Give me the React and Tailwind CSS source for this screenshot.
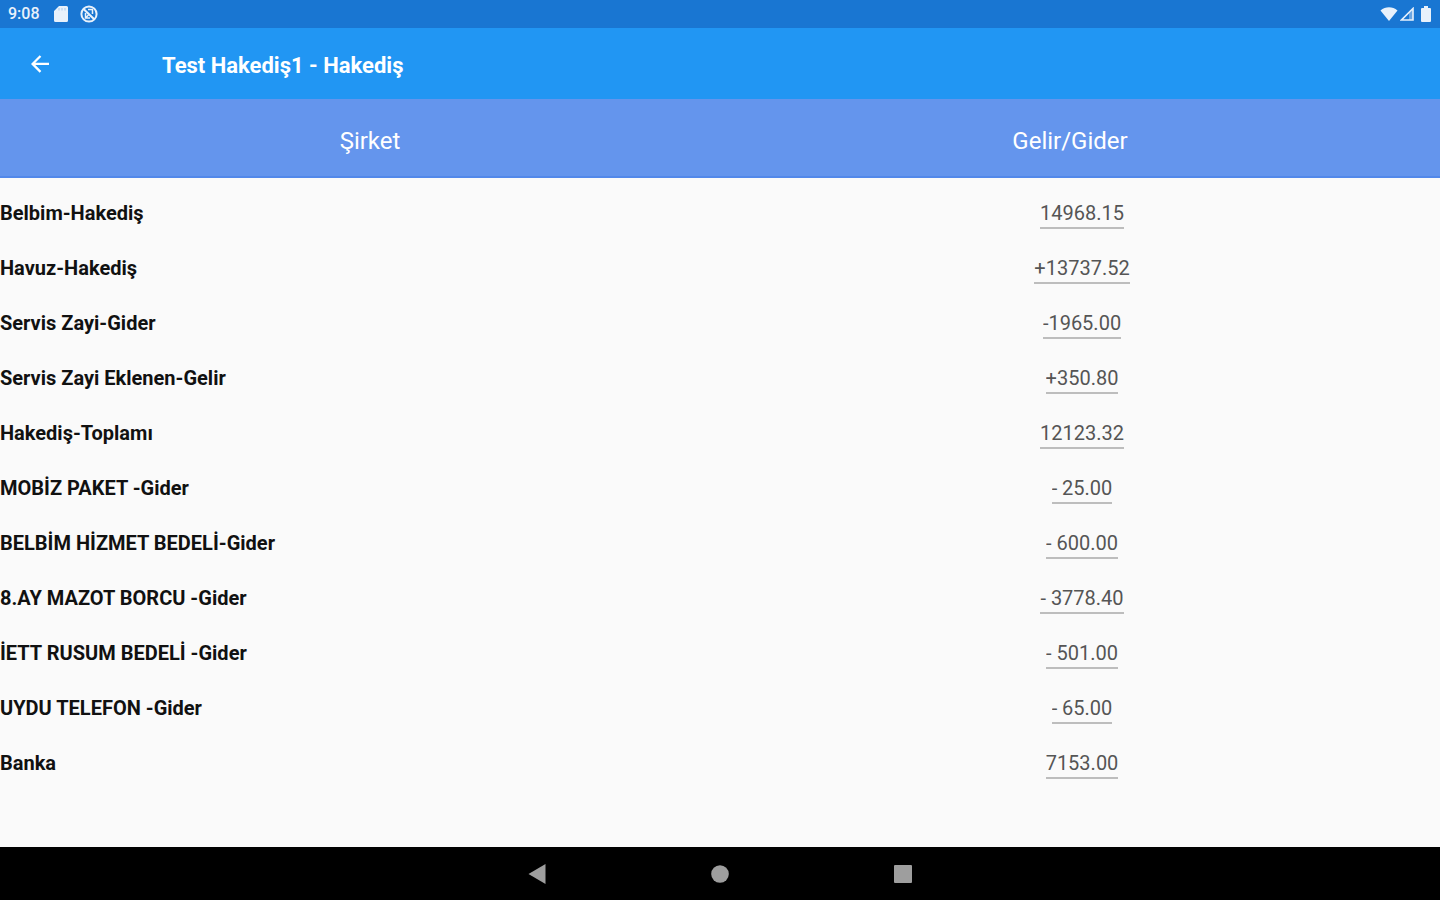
import React, { useState } from 'react';

const initialRows = [
    { id: 'belbim', label: 'Belbim-Hakediş', value: '14968.15' },
    { id: 'havuz', label: 'Havuz-Hakediş', value: '+13737.52' },
    { id: 'zayi-gider', label: 'Servis Zayi-Gider', value: '-1965.00' },
    { id: 'zayi-gelir', label: 'Servis Zayi Eklenen-Gelir', value: '+350.80' },
    { id: 'toplam', label: 'Hakediş-Toplamı', value: '12123.32' },
    { id: 'mobiz', label: 'MOBİZ PAKET -Gider', value: '- 25.00' },
    { id: 'hizmet', label: 'BELBİM HİZMET BEDELİ-Gider', value: '- 600.00' },
    { id: 'mazot', label: '8.AY MAZOT BORCU -Gider', value: '- 3778.40' },
    { id: 'rusum', label: 'İETT RUSUM BEDELİ -Gider', value: '- 501.00' },
    { id: 'telefon', label: 'UYDU TELEFON -Gider', value: '- 65.00' },
    { id: 'banka', label: 'Banka', value: '7153.00' }
];

const App = () => {
    const [rows, setRows] = useState(initialRows);

    const updateRow = (id, value) => {
        setRows(rows.map((row) => (row.id === id ? { ...row, value } : row)));
    };

    return (
        <div className="flex min-h-screen flex-col bg-[#fafafa] font-['Roboto',sans-serif]">
            <StatusBar />

            {/* App bar */}
            <header className="flex h-[71px] items-center bg-[#2196f3] text-white">
                <button type="button" aria-label="Geri" className="ml-7 flex size-6 items-center justify-center">
                    <svg viewBox="0 0 24 24" className="size-6" fill="currentColor">
                        <path d="M21 10.8v2.3H7.3l6 6-1.6 1.6L3 11.9l8.700-8.700 1.600 1.600-6 6z" />
                    </svg>
                </button>
                <h1 className="ml-[110px] pt-1 text-[22px] leading-7 font-bold">Test Hakediş1 - Hakediş</h1>
            </header>

            <main className="flex-1">
                <table className="w-full table-fixed border-collapse">
                    <thead>
                        <tr className="h-[79px] bg-[#6495ed] text-2xl text-white shadow-[inset_0_-2px_0_#5288ea]">
                            <th scope="col" className="p-0 pt-1 pl-5 text-center font-normal">Şirket</th>
                            <th scope="col" className="p-0 pt-1 pr-5 text-center font-normal">Gelir/Gider</th>
                        </tr>
                    </thead>
                    <tbody className="before:block before:h-[7px] before:content-['']">
                        {rows.map((row) => (
                            <AmountRow key={row.id} row={row} onChange={updateRow} />
                        ))}
                    </tbody>
                </table>
            </main>

            <NavigationBar />
        </div>
    );
};

// One company with its editable amount
const AmountRow = ({ row, onChange }) => (
    <tr className="h-[55px]">
        <td className="p-0 text-left">
            <label htmlFor={row.id} className="block text-xl leading-6 font-bold text-[#111111]">{row.label}</label>
        </td>
        <td className="p-0 pl-1 text-center">
            <input
                id={row.id}
                type="text"
                value={row.value}
                onChange={(e) => onChange(row.id, e.target.value)}
                className="inline-block field-sizing-content border-b-2 border-[#bdbdbd] bg-transparent pt-1 pb-0.5 text-center align-middle text-xl leading-6 text-[#555555] outline-none"
            />
        </td>
    </tr>
);

const StatusBar = () => (
    <div className="flex h-7 items-center justify-between bg-[#1976d2] pr-2 pl-2 text-[#e8f1fb]">
        <div className="flex items-center">
            <span className="w-[46px] text-base leading-5 font-medium">9:08</span>
            {/* SD card */}
            <svg viewBox="0 0 14 16" className="mr-3 h-4 w-3.5" fill="currentColor">
                <path d="M5 0h7.5A1.5 1.5 0 0 1 14 1.5v13a1.5 1.5 0 0 1-1.5 1.5h-11A1.5 1.5 0 0 1 0 14.5V5z" />
                <path d="M5 2v2.5M8 2v2.5M11 2v2.5" stroke="#a9cbee" strokeWidth="1" />
            </svg>
            {/* Do-not-sync badge */}
            <svg viewBox="0 0 18 18" className="size-[18px]" fill="none" stroke="currentColor">
                <circle cx="9" cy="9" r="7.6" strokeWidth="2" />
                <path d="M3.5 4l11 10.5" strokeWidth="2.2" />
                <path d="M8 4.500h4.500v4.500M5.500 8v5h4.500M5.500 13l3-3" strokeWidth="1.5" />
            </svg>
        </div>
        <div className="flex items-center">
            {/* Wifi */}
            <svg viewBox="0 0 18 14" className="h-3.5 w-[18px]" fill="currentColor">
                <path d="M0.5 3.500C5.500-.7 12.500-.7 17.500 3.500L9 14z" />
            </svg>
            {/* Signal */}
            <svg viewBox="0 0 14 14" className="ml-0.5 size-3.5" fill="none" stroke="currentColor">
                <path d="M13 1.500V13H1.500z" strokeWidth="1.6" />
                <path d="M9 6v7h4V2z" fill="currentColor" fillOpacity="0.4" stroke="none" />
            </svg>
            {/* Battery */}
            <svg viewBox="0 0 12 16" className="ml-1.5 h-4 w-3" fill="currentColor">
                <path d="M4 0h4v2h2a1 1 0 0 1 1 1v12a1 1 0 0 1-1 1H2a1 1 0 0 1-1-1V3a1 1 0 0 1 1-1h2z" />
            </svg>
        </div>
    </div>
);

// System buttons: back, home, recents
const NavigationBar = () => (
    <nav className="flex h-[53px] items-center justify-center gap-[163px] bg-black text-[#9e9e9e]">
        <button type="button" aria-label="Geri git" className="size-5">
            <svg viewBox="0 0 20 20" className="size-5" fill="currentColor">
                <path d="M18.5 0v20L1.500 10z" />
            </svg>
        </button>
        <button type="button" aria-label="Ana ekran" className="size-5">
            <svg viewBox="0 0 20 20" className="size-5" fill="currentColor">
                <circle cx="10" cy="10" r="8.8" />
            </svg>
        </button>
        <button type="button" aria-label="Son uygulamalar" className="size-5">
            <svg viewBox="0 0 20 20" className="size-5" fill="currentColor">
                <rect x="1" y="1" width="18" height="18" rx="1" />
            </svg>
        </button>
    </nav>
);

export default App;
